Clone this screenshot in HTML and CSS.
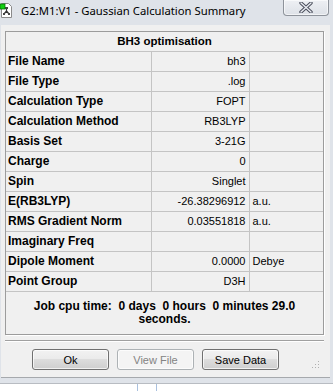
FILE: index.html
```html
<!DOCTYPE html>
<html lang="en">
<head>
  <meta charset="UTF-8" />
  <title>G2:M1:V1 - Gaussian Calculation Summary</title>
  <link rel="stylesheet" href="styles.css">
</head>
<body>
  <div class="window">
    <!-- Titelleiste -->
    <div class="titlebar">
      <svg class="app-icon" width="13" height="16" viewBox="0 0 13 16">
        <path d="M1.5 1.5 H8.5 L11.5 4.5 V15.5 H1.5 Z" fill="#fff" stroke="#8a8a8a" />
        <path d="M6.5 6 V9 M6.5 9 L4 12 M6.5 9 L9 12" stroke="#333" stroke-width="1.2" fill="none" />
        <rect x="5" y="5" width="3" height="2" fill="#444" />
        <rect x="3" y="11" width="2" height="2" fill="#444" />
        <rect x="8" y="11" width="2" height="2" fill="#444" />
        <rect x="0" y="2" width="5" height="5" fill="#10d010" stroke="#067006" stroke-width="0.8" />
      </svg>
      <span class="title">G2:M1:V1 - Gaussian Calculation Summary</span>
      <div class="close-btn">
        <svg width="14" height="11" viewBox="0 0 14 11">
          <path d="M2 1 L12 10 M12 1 L2 10" stroke="#4b4f5c" stroke-width="3.4" stroke-linecap="round" />
          <path d="M2 1 L12 10 M12 1 L2 10" stroke="#e9ecf2" stroke-width="1.4" stroke-linecap="round" />
        </svg>
      </div>
    </div>

    <div class="client">
      <!-- Zusammenfassung -->
      <div class="summary">
        <table class="summary-table">
          <colgroup>
            <col class="col-label">
            <col class="col-value">
            <col>
          </colgroup>
          <tr><th class="summary-head" colspan="3">BH3 optimisation</th></tr>
          <tr><td class="label">File Name</td><td class="value">bh3</td><td class="unit"></td></tr>
          <tr><td class="label">File Type</td><td class="value">.log</td><td class="unit"></td></tr>
          <tr><td class="label">Calculation Type</td><td class="value">FOPT</td><td class="unit"></td></tr>
          <tr><td class="label">Calculation Method</td><td class="value">RB3LYP</td><td class="unit"></td></tr>
          <tr><td class="label">Basis Set</td><td class="value">3-21G</td><td class="unit"></td></tr>
          <tr><td class="label">Charge</td><td class="value">0</td><td class="unit"></td></tr>
          <tr><td class="label">Spin</td><td class="value">Singlet</td><td class="unit"></td></tr>
          <tr><td class="label">E(RB3LYP)</td><td class="value">-26.38296912</td><td class="unit">a.u.</td></tr>
          <tr><td class="label">RMS Gradient Norm</td><td class="value">0.03551818</td><td class="unit">a.u.</td></tr>
          <tr><td class="label">Imaginary Freq</td><td class="value"></td><td class="unit"></td></tr>
          <tr><td class="label">Dipole Moment</td><td class="value">0.0000</td><td class="unit">Debye</td></tr>
          <tr><td class="label">Point Group</td><td class="value">D3H</td><td class="unit"></td></tr>
        </table>
        <div class="cpu-time">Job cpu time:  0 days  0 hours  0 minutes 29.0 seconds.</div>
      </div>

      <div class="separator"></div>

      <!-- Schaltflaechen -->
      <div class="buttons">
        <button class="btn">Ok</button>
        <button class="btn" disabled>View File</button>
        <button class="btn">Save Data</button>
      </div>

      <svg class="grip" width="8" height="8" viewBox="0 0 8 8">
        <rect x="6" y="0" width="1" height="1" fill="#b0b0b0" />
        <rect x="3" y="3" width="1" height="1" fill="#b0b0b0" />
        <rect x="6" y="3" width="1" height="1" fill="#b0b0b0" />
        <rect x="0" y="6" width="1" height="1" fill="#b0b0b0" />
        <rect x="3" y="6" width="1" height="1" fill="#b0b0b0" />
        <rect x="6" y="6" width="1" height="1" fill="#b0b0b0" />
      </svg>
    </div>
  </div>

  <div class="desktop"><span class="desktop-lines"></span></div>
</body>
</html>
```

FILE: styles.css
```css
html, body {
  margin: 0;
  background: #fff;
  font-family: 'Liberation Sans', Arial, sans-serif;
  font-size: 11px;
  color: #000;
}

.window {
  width: 333px;
  background: #dfe3e9;
  padding-bottom: 5px;
  border-bottom: 1px solid #b8bcc2;
}

/* Titelleiste */
.titlebar {
  height: 25px;
  display: flex;
  align-items: flex-start;
}

.app-icon {
  margin-top: 2px;
  flex-shrink: 0;
}

.title {
  margin-left: 8px;
  margin-top: 3px;
  font-family: 'Noto Sans', 'Open Sans', sans-serif;
  font-size: 11.3px;
  line-height: 16px;
  color: #000;
  white-space: nowrap;
}

.close-btn {
  margin-left: auto;
  margin-right: 4px;
  width: 44px;
  height: 15px;
  border: 1px solid #8e939b;
  border-top: none;
  border-radius: 0 0 4px 4px;
  background: linear-gradient(#eef0f4, #dde1e7);
  display: flex;
  align-items: center;
  justify-content: center;
  box-shadow: inset 0 0 0 1px rgba(255, 255, 255, 0.6);
}

/* Fensterinhalt */
.client {
  position: relative;
  margin: 0 3px 0 1px;
  background: #f0f0f0;
  padding: 6px 6px 7px 4px;
  border-bottom: 1px solid #a6a9ad;
}

.summary {
  border: 1px solid #9c9c9c;
  box-shadow: 1px 1px 0 #fff;
}

.summary-table {
  width: 100%;
  border-collapse: collapse;
  table-layout: fixed;
}

.col-label {
  width: 145px;
}

.col-value {
  width: 98px;
}

.summary-table th,
.summary-table td {
  padding: 0;
  line-height: 19px;
  height: 19px;
  border-bottom: 1px solid #c4c4c4;
  white-space: nowrap;
  overflow: hidden;
}

.summary-head {
  font-size: 11.5px;
  font-weight: bold;
  text-align: center;
}

.summary-table .label {
  padding-left: 2px;
  font-size: 12px;
  font-weight: bold;
  border-right: 1px solid #c4c4c4;
}

.summary-table .value {
  padding-right: 3px;
  text-align: right;
  border-right: 1px solid #c4c4c4;
}

.summary-table .unit {
  padding-left: 3px;
}

.cpu-time {
  padding: 8px 20px 8px;
  font-size: 12px;
  font-weight: bold;
  line-height: 13px;
  text-align: center;
  white-space: pre-wrap;
}

.separator {
  margin-top: 5px;
  border-top: 1px solid #a0a0a0;
  border-bottom: 1px solid #fff;
}

.buttons {
  display: flex;
  gap: 8px;
  padding-left: 27px;
  margin-top: 7px;
}

.btn {
  width: 77px;
  height: 21px;
  padding: 0;
  font-family: 'Liberation Sans', Arial, sans-serif;
  font-size: 11px;
  color: #000;
  border: 1px solid #707070;
  border-radius: 3px;
  background: linear-gradient(#f2f2f2 0%, #ebebeb 45%, #dddddd 50%, #cfcfcf 100%);
  box-shadow: inset 0 0 0 1px rgba(255, 255, 255, 0.7);
}

.btn:disabled {
  color: #838383;
  border-color: #adb2b5;
  background: #f4f4f4;
}

.grip {
  position: absolute;
  right: 10px;
  bottom: 8px;
}

/* Hintergrund unter dem Fenster */
.desktop {
  height: 8px;
}

.desktop-lines {
  display: block;
  margin-left: 137px;
  width: 18px;
  height: 8px;
  border-left: 1px solid #a9c0de;
  border-right: 1px solid #a9c0de;
}
```
